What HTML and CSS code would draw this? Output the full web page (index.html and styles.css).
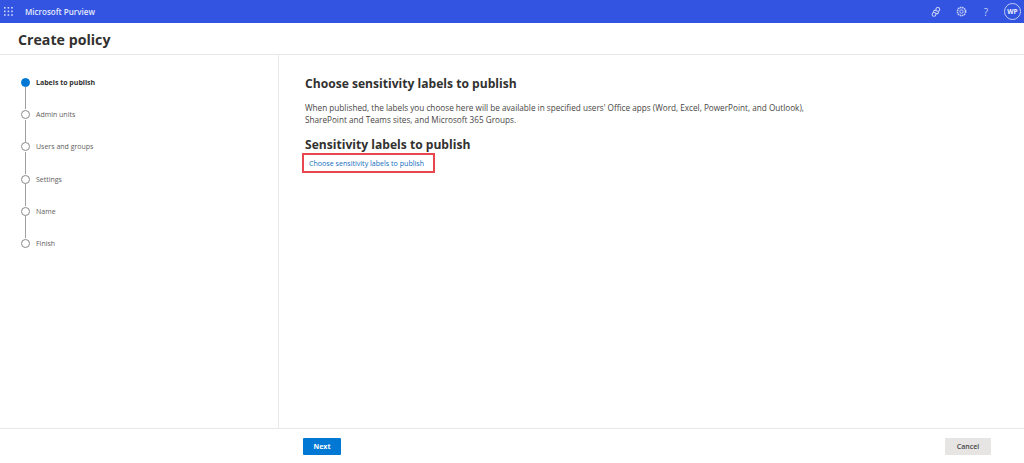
FILE: index.html
```
<!DOCTYPE html>
<html lang="en">
<head>
<meta charset="utf-8">
<title>Create policy</title>
<link rel="stylesheet" href="styles.css">
</head>
<body>
<div class="page">
  <header class="topbar">
    <svg class="waffle" width="9" height="9" viewBox="0 0 9 9" fill="#cfd8fa">
      <rect x="0" y="0" width="1.6" height="1.6"/><rect x="3.6" y="0" width="1.6" height="1.6"/><rect x="7.2" y="0" width="1.6" height="1.6"/>
      <rect x="0" y="3.6" width="1.6" height="1.6"/><rect x="3.6" y="3.6" width="1.6" height="1.6"/><rect x="7.2" y="3.6" width="1.6" height="1.6"/>
      <rect x="0" y="7.2" width="1.6" height="1.6"/><rect x="3.6" y="7.2" width="1.6" height="1.6"/><rect x="7.2" y="7.2" width="1.6" height="1.6"/>
    </svg>
    <span class="brand">Microsoft Purview</span>
    <div class="actions">
      <svg class="icon" width="10" height="10" viewBox="0 0 10 10" fill="none" stroke="#c3cdf8" stroke-width="1.1">
        <circle cx="6.8" cy="2.4" r="1.9"/><circle cx="3" cy="7.4" r="1.9"/><path d="M5 3.4 H3.2 a1.3 1.3 0 0 0 0 2.2 M5 6.6 H6.8 a1.3 1.3 0 0 0 0 -2.2"/>
      </svg>
      <svg class="icon" width="11" height="11" viewBox="0 0 11 11" fill="none" stroke="#c3cdf8">
        <circle cx="5.5" cy="5.5" r="1.7"/><circle cx="5.5" cy="5.5" r="4.1" stroke-width="1.6" stroke-dasharray="1.6 .55"/>
      </svg>
      <span class="help">?</span>
      <span class="avatar">WP</span>
    </div>
  </header>
  <div class="titlebar"><h1 class="title">Create policy</h1></div>
  <div class="middle">
    <nav class="steps">
      <div class="step current"><span class="dot"></span><span class="step-label">Labels to publish</span></div>
      <div class="step"><span class="dot"></span><span class="step-label">Admin units</span></div>
      <div class="step"><span class="dot"></span><span class="step-label">Users and groups</span></div>
      <div class="step"><span class="dot"></span><span class="step-label">Settings</span></div>
      <div class="step"><span class="dot"></span><span class="step-label">Name</span></div>
      <div class="step last"><span class="dot"></span><span class="step-label">Finish</span></div>
    </nav>
    <main class="content">
      <h2 class="heading">Choose sensitivity labels to publish</h2>
      <p class="desc">When published, the labels you choose here will be available in specified users' Office apps (Word, Excel, PowerPoint, and Outlook), SharePoint and Teams sites, and Microsoft 365 Groups.</p>
      <h3 class="subheading">Sensitivity labels to publish</h3>
      <a class="choose" href="#">Choose sensitivity labels to publish</a>
    </main>
  </div>
  <footer class="footer">
    <button class="btn primary">Next</button>
    <button class="btn cancel">Cancel</button>
  </footer>
</div>
</body>
</html>
```
FILE: styles.css
```
* { box-sizing: border-box; }
html, body { margin: 0; height: 100%; }
body { font-family: "Open Sans", "Noto Sans", sans-serif; background: #fff; color: #323130; overflow: hidden; }
.page { display: flex; flex-direction: column; height: 463px; width: 1024px; }
.topbar { flex: none; height: 23px; background: #3254e0; display: flex; align-items: center; padding-left: 4px; color: #fff; }
.waffle { flex: none; }
.brand { margin-left: 12px; font-size: 8px; font-weight: 600; color: #e4e9fd; }
.actions { margin-left: auto; display: flex; align-items: center; padding-right: 3px; }
.icon { flex: none; margin-right: 15px; }
.help { font-size: 10px; color: #c3cdf8; width: 8px; text-align: center; margin-right: 14px; }
.avatar { width: 17px; height: 17px; border-radius: 50%; border: 1px solid #c3cdf8; font-size: 6.5px; font-weight: 700; display: flex; align-items: center; justify-content: center; color: #eef1fe; }
.titlebar { flex: none; height: 32px; border-bottom: 1px solid #e9e8e7; padding: 2px 0 0 18px; display: flex; align-items: center; }
.title { margin: 0; font-size: 14.2px; font-weight: 700; color: #323130; line-height: 20px; }
.middle { flex: 1; display: flex; min-height: 0; }
.steps { flex: none; width: 279px; border-right: 1px solid #e9e8e7; padding: 22.4px 0 0 21px; }
.step { display: flex; align-items: center; height: 32.2px; position: relative; margin-top: -11px; margin-bottom: 11px; }
.step:not(.last)::after { content: ""; position: absolute; left: 4px; top: 21px; width: 1px; height: 22px; background: #a19f9d; }
.dot { flex: none; width: 9px; height: 9px; border-radius: 50%; border: 1px solid #8a8886; background: #fff; }
.current .dot { background: #0078d4; border-color: #0078d4; }
.step-label { margin-left: 6px; font-size: 7px; color: #605e5c; }
.current .step-label { font-weight: 700; color: #323130; }
.content { flex: 1; padding: 20px 0 0 26px; }
.heading { margin: 0; font-size: 12.1px; font-weight: 700; color: #323130; line-height: 17px; }
.desc { margin: 10px 0 0; width: 530px; font-size: 8.2px; line-height: 12px; color: #484644; }
.subheading { margin: 10px 0 0; font-size: 12.1px; font-weight: 700; line-height: 17px; color: #323130; }
.choose { display: block; margin: 0 0 0 -3px; width: 133px; height: 20px; border: 2px solid #e8474f; padding-left: 5px; font-size: 7.1px; line-height: 16px; color: #106ebe; text-decoration: none; }
.footer { flex: none; height: 35px; border-top: 1px solid #e9e8e7; display: flex; align-items: center; padding: 0 33px 0 303px; justify-content: space-between; }
.btn { height: 17px; border: 0; border-radius: 1px; font-family: inherit; font-size: 7px; font-weight: 700; padding: 0; }
.primary { width: 38px; background: #0078d4; color: #fff; }
.cancel { width: 46px; background: #e6e5e4; color: #484644; font-weight: 600; }
```
